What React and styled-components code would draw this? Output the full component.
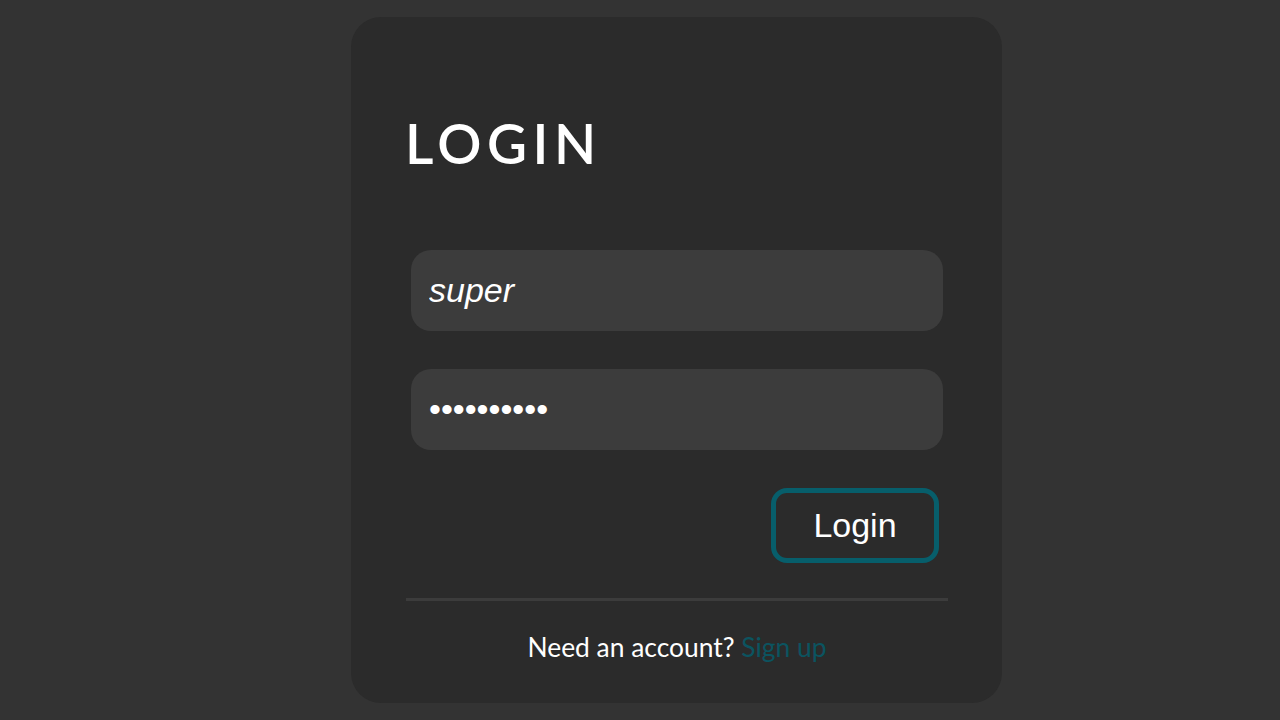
import React from 'react';
import styled, { createGlobalStyle } from 'styled-components';

const GlobalStyle = createGlobalStyle`
  html, body {
    margin: 0;
    padding: 0;
    background: #333333;
    height: 100%;
  }
  body {
    font-family: Lato, "Liberation Sans", sans-serif;
  }
`;

const Page = styled.div`
  width: 1280px;
  height: 720px;
  padding-top: 17px;
  padding-left: 351px;
  box-sizing: border-box;
  overflow: hidden;
`;

const Card = styled.div`
  width: 651px;
  height: 686px;
  box-sizing: border-box;
  background: #2b2b2b;
  border-radius: 30px;
  padding: 99px 54px 0 55px;
  display: flex;
  flex-direction: column;
`;

const Title = styled.h1`
  margin: 0 0 0 -1px;
  font-family: Lato, sans-serif;
  font-weight: 600;
  font-size: 55px;
  line-height: 1;
  letter-spacing: 5.5px;
  color: #ffffff;
`;

const Form = styled.form`
  display: flex;
  flex-direction: column;
  padding: 0 5px;
  margin-top: 79px;
`;

const Input = styled.input`
  height: 81px;
  box-sizing: border-box;
  border: none;
  outline: none;
  border-radius: 20px;
  background: #3c3c3c;
  color: #ffffff;
  font-family: "Liberation Sans", Arial, sans-serif;
  font-size: 34px;
  font-style: ${props => (props.type === 'password' ? 'normal' : 'italic')};
  padding: 0 18px;
  margin-bottom: ${props => props.gap || 0}px;
`;

const Actions = styled.div`
  display: flex;
  justify-content: flex-end;
  padding-right: 4px;
  margin-top: 38px;
`;

const Button = styled.button`
  width: 168px;
  height: 75px;
  box-sizing: border-box;
  border: 5px solid #075e6b;
  border-radius: 16px;
  background: transparent;
  color: #ffffff;
  font-family: "Liberation Sans", Arial, sans-serif;
  font-size: 34px;
  padding: 0;
  cursor: pointer;
`;

const Divider = styled.hr`
  margin: 35px 0 0;
  border: none;
  height: 3px;
  background: #3c3c3c;
`;

const Footer = styled.p`
  margin: 30px 0 0;
  text-align: center;
  font-family: Lato, sans-serif;
  font-size: 26.4px;
  color: #ffffff;
`;

const SignUp = styled.a`
  color: #0b5460;
  text-decoration: none;
`;

export default function App() {
  return (
    <>
      <GlobalStyle />
      <Page>
        <Card>
          <Title>LOGIN</Title>
          <Form onSubmit={e => e.preventDefault()}>
            <Input type="text" defaultValue="super" gap={38} />
            <Input type="password" defaultValue="supersecre" />
            <Actions>
              <Button type="submit">Login</Button>
            </Actions>
          </Form>
          <Divider />
          <Footer>
            Need an account? <SignUp href="#">Sign up</SignUp>
          </Footer>
        </Card>
      </Page>
    </>
  );
}
